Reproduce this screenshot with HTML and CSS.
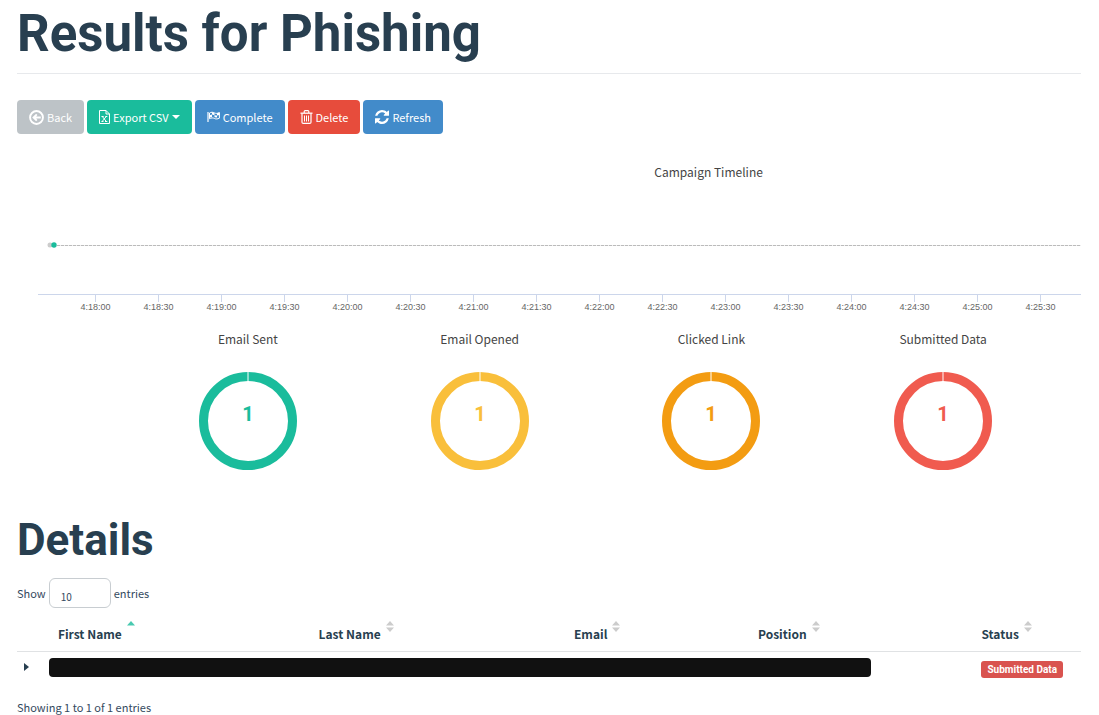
FILE: index.html
```
<!DOCTYPE html>
<html lang="en">
<head>
<meta charset="utf-8">
<title>Results for Phishing</title>
<link rel="stylesheet" href="styles.css">
</head>
<body>
<main class="page">
  <h1 class="page-title">Results for Phishing</h1>

  <div class="toolbar">
    <button type="button" class="btn btn-muted">
      <svg class="icon" width="15" height="15" viewBox="0 0 14 14" aria-hidden="true"><circle cx="7" cy="7" r="6" fill="none" stroke="currentColor" stroke-width="1.800"/><path d="M3 7l3.600-3.600 1.300 1.300L6.700 6H11v2H6.700l1.200 1.300-1.300 1.300z" fill="currentColor"/></svg>
      Back
    </button>
    <button type="button" class="btn btn-green" aria-haspopup="true">
      <svg class="icon" width="11" height="14" viewBox="0 0 11 14" fill="none" stroke="currentColor" aria-hidden="true"><path d="M.5.5H7L10.500 4v9.500H.5zM7 .5V4h3.500"/><path d="M3.300 6.500l4 5M7.200 6.500l-4 5M2.500 6.500h2.200M6.300 6.500h2M2.500 11.500h2M6 11.500h2.300"/></svg>
      Export CSV
      <span class="caret"></span>
    </button>
    <button type="button" class="btn btn-blue">
      <svg class="icon" width="13" height="14" viewBox="0 0 13 14" aria-hidden="true"><path d="M1 2v10" stroke="currentColor" stroke-width="1.200"/><path d="M2.500 3C4.200 2 6 2 7.500 2.900c1.500.8 3 .6 4.900-.3v5.600c-1.900.9-3.400 1-4.900.3-1.500-.8-3.200-.8-5 .2z" fill="none" stroke="currentColor"/><path d="M5 2.300l2.500.6v2.300L5 4.600zM2.500 5.300L5 4.600v2.300l-2.500.7zM7.500 5.200l2.500.2v2.200l-2.500-.3zM10 3.300l2.400-.7v2.300L10 5.400z" fill="currentColor"/></svg>
      Complete
    </button>
    <button type="button" class="btn btn-red">
      <svg class="icon" width="13" height="14" viewBox="0 0 12 14" fill="none" stroke="currentColor" aria-hidden="true"><path d="M0 3.200h12" stroke-width="1.300"/><path d="M3.700 3V1.600q0-.9.9-.9h2.800q.9 0 .9.9V3M1.500 3.500v8.700q0 1.200 1.200 1.200h6.600q1.200 0 1.200-1.200V3.500" stroke-width="1.200"/><path d="M4 5.500v6M6 5.500v6M8 5.500v6"/></svg>
      Delete
    </button>
    <button type="button" class="btn btn-blue">
      <svg class="icon" width="14" height="14" viewBox="0 0 1536 1536" fill="currentColor" aria-hidden="true"><path d="M1511 928q0 5-1 7-64 268-268 434.500T764 1536q-146 0-282.500-55T238 1324l-129 129q-19 19-45 19t-45-19-19-45V960q0-26 19-45t45-19h448q26 0 45 19t19 45-19 45l-137 137q71 66 161 102t187 36q134 0 250-65t186-179q11-17 53-117 8-23 30-23h192q13 0 22.500 9.500t9.500 22.500zm25-800v448q0 26-19 45t-45 19h-448q-26 0-45-19t-19-45 19-45l138-138Q969 256 768 256q-134 0-250 65T332 500q-11 17-53 117-8 23-30 23H50q-13 0-22.500-9.500T18 608v-7q65-268 270-434.500T768 0q146 0 284 55.500T1297 212l130-129q19-19 45-19t45 19 19 45z"/></svg>
      Refresh
    </button>
  </div>

  <section class="timeline">
    <h2 class="chart-title timeline-title">Campaign Timeline</h2>
    <div class="series">
      <svg class="points" width="10" height="6" viewBox="0 0 10 6" aria-hidden="true"><circle cx="3" cy="3" r="2.500" fill="#ccc"/><circle cx="7" cy="3" r="2.700" fill="#1abc9c"/></svg>
      <span class="series-line"></span>
    </div>
    <div class="axis">
      <span class="tick">4:18:00</span><span class="tick">4:18:30</span><span class="tick">4:19:00</span><span class="tick">4:19:30</span><span class="tick">4:20:00</span><span class="tick">4:20:30</span><span class="tick">4:21:00</span><span class="tick">4:21:30</span><span class="tick">4:22:00</span><span class="tick">4:22:30</span><span class="tick">4:23:00</span><span class="tick">4:23:30</span><span class="tick">4:24:00</span><span class="tick">4:24:30</span><span class="tick">4:25:00</span><span class="tick">4:25:30</span>
    </div>
  </section>

  <section class="donuts">
    <div class="donut sent">
      <h2 class="chart-title">Email Sent</h2>
      <svg width="98" height="98" viewBox="0 0 98 98"><circle class="ring" cx="49" cy="49" r="44.500"/><path class="seam" d="M49 0v10"/><text class="count" x="49" y="49">1</text></svg>
    </div>
    <div class="donut opened">
      <h2 class="chart-title">Email Opened</h2>
      <svg width="98" height="98" viewBox="0 0 98 98"><circle class="ring" cx="49" cy="49" r="44.500"/><path class="seam" d="M49 0v10"/><text class="count" x="49" y="49">1</text></svg>
    </div>
    <div class="donut clicked">
      <h2 class="chart-title">Clicked Link</h2>
      <svg width="98" height="98" viewBox="0 0 98 98"><circle class="ring" cx="49" cy="49" r="44.500"/><path class="seam" d="M49 0v10"/><text class="count" x="49" y="49">1</text></svg>
    </div>
    <div class="donut submitted">
      <h2 class="chart-title">Submitted Data</h2>
      <svg width="98" height="98" viewBox="0 0 98 98"><circle class="ring" cx="49" cy="49" r="44.500"/><path class="seam" d="M49 0v10"/><text class="count" x="49" y="49">1</text></svg>
    </div>
  </section>

  <h2 class="section-title">Details</h2>
  <div class="length">
    <label for="length">Show</label>
    <select id="length" class="length-select"><option>10</option></select>
    <span>entries</span>
  </div>

  <table class="details">
    <colgroup><col class="col-toggle"><col class="col-first"><col class="col-last"><col class="col-email"><col class="col-position"><col class="col-status"></colgroup>
    <thead>
      <tr>
        <td></td>
        <th scope="col" aria-sort="ascending"><span class="head">First Name <svg class="sort" width="8" height="11" viewBox="0 0 8 11" aria-hidden="true"><path d="M0 4.500L4 0l4 4.500z" fill="#48c9b0"/></svg></span></th>
        <th scope="col"><span class="head">Last Name <svg class="sort" width="8" height="11" viewBox="0 0 8 11" aria-hidden="true"><path d="M0 4.500L4 0l4 4.500zM0 6.500h8L4 11z" fill="#ccc"/></svg></span></th>
        <th scope="col"><span class="head">Email <svg class="sort" width="8" height="11" viewBox="0 0 8 11" aria-hidden="true"><path d="M0 4.500L4 0l4 4.500zM0 6.500h8L4 11z" fill="#ccc"/></svg></span></th>
        <th scope="col"><span class="head">Position <svg class="sort" width="8" height="11" viewBox="0 0 8 11" aria-hidden="true"><path d="M0 4.500L4 0l4 4.500zM0 6.500h8L4 11z" fill="#ccc"/></svg></span></th>
        <th scope="col"><span class="head">Status <svg class="sort" width="8" height="11" viewBox="0 0 8 11" aria-hidden="true"><path d="M0 4.500L4 0l4 4.500zM0 6.500h8L4 11z" fill="#ccc"/></svg></span></th>
      </tr>
    </thead>
    <tbody>
      <tr>
        <td><button type="button" class="expand" aria-label="Show row details"><svg width="5" height="8" viewBox="0 0 5 8" aria-hidden="true"><path d="M0 0l5 4-5 4z" fill="currentColor"/></svg></button></td>
        <td colspan="4"><div class="redacted"></div></td>
        <td class="status-cell"><span class="badge">Submitted Data</span></td>
      </tr>
    </tbody>
  </table>
  <p class="info">Showing 1 to 1 of 1 entries</p>
</main>
</body>
</html>
```
FILE: styles.css
```
* {
  box-sizing: border-box;
}

body {
  margin: 0;
  background: #fff;
  color: #34495e;
  font-family: "Noto Sans CJK SC", "Noto Sans", sans-serif;
  font-size: 11px;
  line-height: 18px;
}

.page {
  padding: 0 18px 0 17px;
}

.page-title,
.section-title {
  margin: 0;
  color: #283f50;
  font-family: Roboto, sans-serif;
  font-weight: 700;
}

.page-title {
  padding: 4px 0 9px;
  border-bottom: 1px solid #e7e9ec;
  font-size: 51px;
  line-height: 60px;
}

.toolbar {
  display: flex;
  gap: 3px;
  margin-top: 26px;
}

.btn {
  display: flex;
  align-items: center;
  gap: 3px;
  height: 34px;
  padding: 0 12px;
  border: 0;
  border-radius: 4px;
  color: #fff;
  font: inherit;
  line-height: 18px;
  white-space: nowrap;
}

.icon {
  flex: none;
}

.btn-muted {
  background: #bdc3c7;
}

.btn-green {
  background: #1abc9c;
}

.btn-blue {
  background: #428bca;
}

.btn-red {
  background: #e74c3c;
}

.caret {
  border: 4px solid transparent;
  border-top-color: currentColor;
  border-bottom: 0;
}

.chart-title {
  margin: 0;
  color: #444;
  font-size: 12px;
  font-weight: 400;
  line-height: 18px;
  text-align: center;
}

.timeline {
  margin-top: 29px;
  overflow: hidden;
}

.timeline-title {
  width: 130%;
}

.series {
  display: flex;
  align-items: center;
  margin: 61px 0 46px 30px;
}

.series-line {
  flex: 1;
  height: 1px;
  background: repeating-linear-gradient(90deg, #bbb 0 3px, #eee 3px 4px);
}

.axis {
  display: flex;
  margin-left: 21px;
  padding: 0 9px 0 26px;
  border-top: 1px solid #ccd6eb;
  color: #666;
  font-family: "Liberation Sans", sans-serif;
  font-size: 9px;
  line-height: 10px;
}

.tick {
  display: flex;
  flex: 1;
  flex-direction: column;
  align-items: center;
}

.tick::before {
  height: 7px;
  border-left: 1px solid #ccd6eb;
  content: "";
}

.donuts {
  display: grid;
  grid-template-columns: repeat(4, 1fr);
  margin-top: 18px;
  padding: 0 22px 0 115px;
}

.donut {
  display: flex;
  flex-direction: column;
  align-items: center;
  gap: 24px;
}

.sent {
  color: #1abc9c;
}

.opened {
  color: #f9bf3b;
}

.clicked {
  color: #f39c12;
}

.submitted {
  color: #f05b4f;
}

.ring {
  fill: none;
  stroke: currentColor;
  stroke-width: 9px;
}

.seam {
  stroke: #fff;
  stroke-width: 1px;
}

.count {
  fill: currentColor;
  font-family: Roboto, sans-serif;
  font-size: 20px;
  font-weight: 700;
  text-anchor: middle;
}

.section-title {
  margin-top: 43px;
  font-size: 44px;
  line-height: 54px;
}

.length {
  display: flex;
  align-items: center;
  gap: 3px;
  margin-top: 11px;
}

.length-select {
  width: 62px;
  height: 30px;
  padding: 7px 11px 0;
  border: 1px solid #c8cdd1;
  border-radius: 6px;
  appearance: none;
  background: #fff;
  color: #34495e;
  font: inherit;
  font-size: 10px;
}

.details {
  width: 100%;
  margin-top: 9px;
  border-collapse: collapse;
  font-size: 12px;
  table-layout: fixed;
}

.details td,
.details th {
  padding: 0;
}

.details th {
  height: 34px;
  padding-left: 9px;
  color: #283f50;
  font-weight: 700;
  text-align: left;
  vertical-align: top;
}

.details thead tr {
  border-bottom: 1px solid #e0e2e4;
}

.details tbody td {
  height: 32px;
}

.details .status-cell {
  padding: 3px 0 0 9px;
}

.col-toggle {
  width: 3%;
}

.col-first {
  width: 24.5%;
}

.col-last {
  width: 24%;
}

.col-email {
  width: 17.3%;
}

.col-position {
  width: 21%;
}

.head {
  display: flex;
  gap: 5px;
  padding-top: 8px;
}

.sort {
  margin-top: -4px;
}

.expand {
  display: flex;
  padding: 0 7px;
  border: 0;
  background: none;
  color: #283f50;
}

.redacted {
  width: 89%;
  height: 19px;
  border-radius: 4px;
  background: #111;
}

.badge {
  display: inline-block;
  padding: 0 6px;
  border-radius: 3px;
  background: #d9534f;
  color: #fff;
  font-family: Roboto, sans-serif;
  font-size: 10px;
  font-weight: 700;
  line-height: 17px;
}

.info {
  margin: 15px 0 0;
}
```
